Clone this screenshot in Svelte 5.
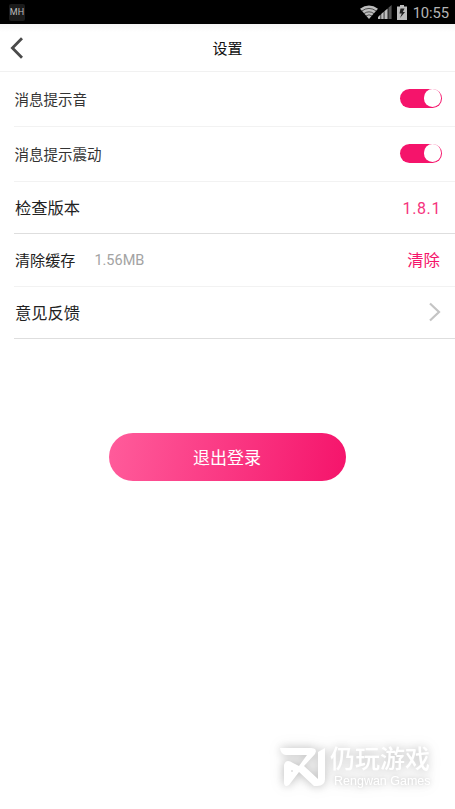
<script lang="ts">
    let sound = $state(true);
    let vibrate = $state(true);
    let cache = $state("1.56MB");
</script>

{#snippet toggle(on: boolean, label: string, flip: () => void)}
    <button class="toggle" class:on role="switch" aria-checked={on} aria-label={label} onclick={flip}>
        <span class="thumb"></span>
    </button>
{/snippet}

<div class="screen">
    <div class="status">
        <span class="app-badge">MH</span>
        <div class="status-right">
            <svg class="wifi" width="18" height="14" viewBox="0 0 18 14">
                <path d="M0 3.8Q9-3 18 3.8L9 14Z" fill="#bdbdbd" />
                <path d="M1.5 6.2Q9 .6 16.5 6.2M3.7 8.8Q9 4.8 14.3 8.8M5.8 11Q9 8.6 12.2 11" fill="none" stroke="#000" stroke-width=".6" />
            </svg>
            <svg class="signal" width="14" height="14" viewBox="0 0 14 14">
                <path d="M0 14V12L2.5 9.6V14ZM3.2 14V9L5.7 6.8V14ZM6.4 14V6.2L9.6 3.4V14Z" fill="#bdbdbd" />
                <path d="M10.4 14V2.8L13.6 0V14Z" fill="#555" />
            </svg>
            <svg class="battery" width="10" height="15" viewBox="0 0 10 15">
                <path d="M3 0H7V1.5H10V15H0V1.5H3Z" fill="#bdbdbd" />
                <path d="M7.5 3.5H3.5L2.5 8.5H4.8L3 13L8 7H5.8Z" fill="#222" />
            </svg>
            <span class="clock">10:55</span>
        </div>
    </div>

    <header>
        <button class="back" aria-label="返回">
            <svg width="14" height="22" viewBox="0 0 14 22">
                <path d="M12 1.2L2.4 11L12 20.8" fill="none" stroke="#4a4a4a" stroke-width="2.8" />
            </svg>
        </button>
        <h1>设置</h1>
    </header>

    <main>
        <div class="row tall">
            <span class="label small">消息提示音</span>
            {@render toggle(sound, "消息提示音", () => (sound = !sound))}
        </div>
        <div class="row tall">
            <span class="label small">消息提示震动</span>
            {@render toggle(vibrate, "消息提示震动", () => (vibrate = !vibrate))}
        </div>
        <div class="row dark">
            <span class="label">检查版本</span>
            <span class="version">1.8.1</span>
        </div>
        <div class="row cache">
            <span class="label medium">清除缓存</span>
            <span class="size">{cache}</span>
            <button class="clear" onclick={() => (cache = "0MB")}>清除</button>
        </div>
        <div class="row dark">
            <span class="label">意见反馈</span>
            <svg class="arrow" width="12" height="20" viewBox="0 0 12 20">
                <path d="M1 1.5L10 10L1 18.5" fill="none" stroke="#c4c4c4" stroke-width="2.2" />
            </svg>
        </div>
    </main>

    <button class="logout">退出登录</button>

    <div class="watermark">
        <svg width="47" height="42" viewBox="0 0 47 42">
            <path d="M1 2H32Q39 2 36 8L25 20L39 33V6L46 2V33Q46 40 38 40H35L20 26L10 39Q5 42 5 36V19Q7 12 14 17L20 20L28 9H7Q2 9 1 2Z" fill="#fff" />
            <circle cx="13" cy="25" r="1" fill="#ddd" />
        </svg>
        <div class="brand">
            <span class="brand-cn">仍玩游戏</span>
            <span class="brand-en">Rengwan Games</span>
        </div>
    </div>
</div>

<style>
    :global(body) {
        margin: 0;
        background: #fff;
    }

    .screen {
        position: relative;
        height: 809px;
        overflow: hidden;
        background: #fff;
        color: #222;
        font-family: Roboto, "Noto Sans CJK SC", sans-serif;
    }

    button {
        padding: 0;
        border: none;
        background: none;
        font-family: inherit;
        cursor: pointer;
    }

    svg {
        display: block;
        flex: none;
    }

    .status {
        display: flex;
        align-items: center;
        justify-content: space-between;
        height: 24px;
        padding: 0 6px 0 9px;
        background: #000;
    }

    .app-badge {
        width: 16px;
        height: 17px;
        border-radius: 2px;
        background: #1b1b1b;
        color: #bbb;
        font-size: 9px;
        line-height: 17px;
        text-align: center;
    }

    .status-right {
        display: flex;
        align-items: center;
    }

    .battery {
        margin: 0 6px 0 5px;
    }

    .clock {
        padding-top: 1px;
        color: #b5b5b5;
        font-size: 14.8px;
        line-height: 24px;
        letter-spacing: -0.1px;
    }

    header {
        display: grid;
        grid-template-columns: 40px 1fr 40px;
        align-items: center;
        height: 47px;
        border-bottom: 1px solid #f1f1f1;
        background: linear-gradient(#f5f5f5, #fff 8px);
    }

    .back {
        padding-left: 10px;
    }

    h1 {
        margin: 0;
        padding-top: 2px;
        color: #111;
        font-size: 15px;
        font-weight: 400;
        line-height: 22px;
        text-align: center;
    }

    main {
        padding-left: 14px;
    }

    .row {
        display: flex;
        align-items: center;
        box-sizing: border-box;
        height: 52px;
        padding-right: 14px;
        border-bottom: 1px solid #f2f2f2;
    }

    .row.tall {
        height: 55px;
        padding-right: 13px;
    }

    .row.dark {
        border-color: #dedede;
    }

    .row.cache {
        height: 53px;
    }

    .label {
        flex: 1;
        padding: 2px 0 0 1px;
        font-size: 16.3px;
        line-height: 24px;
    }

    .small {
        padding: 3px 0 0 0.5px;
        color: #333;
        font-size: 14.5px;
    }

    .medium {
        flex: none;
        font-size: 15.1px;
    }

    .toggle {
        display: flex;
        box-sizing: border-box;
        width: 42px;
        height: 19px;
        margin-bottom: 2px;
        padding: 0.8px;
        border-radius: 10px;
        background: #ccc;
    }

    .toggle.on {
        justify-content: flex-end;
        background: #f5146b;
    }

    .thumb {
        width: 17.4px;
        height: 17.4px;
        border-radius: 50%;
        background: #fff;
    }

    .version {
        padding-top: 2px;
        color: #f5337e;
        font-size: 16px;
        letter-spacing: 0.6px;
    }

    .size {
        flex: 1;
        margin-left: 19px;
        padding-top: 1px;
        color: #a3a3a3;
        font-size: 14.5px;
    }

    .clear {
        padding: 2px 1px 0 0;
        color: #f5146b;
        font-size: 16.4px;
        line-height: 24px;
    }

    .arrow {
        margin-bottom: 1px;
    }

    .logout {
        display: block;
        width: 237px;
        height: 48px;
        margin: 94px auto 0;
        padding: 0 1px 1px 0;
        border-radius: 24px;
        background: linear-gradient(100deg, #ff5c9b, #f5146b);
        color: #fff;
        font-size: 17px;
    }

    /* white mark that only shows through its own shadow */
    .watermark {
        position: absolute;
        left: 279px;
        top: 745px;
        display: flex;
        gap: 4px;
        color: #fff;
        filter: drop-shadow(0 0 5px rgba(0, 0, 0, 0.2)) drop-shadow(0 0 7px rgba(0, 0, 0, 0.1));
    }

    .watermark svg {
        margin-top: 1px;
    }

    .brand {
        display: flex;
        flex-direction: column;
    }

    .brand-cn {
        padding-top: 1px;
        font-size: 25px;
        font-weight: 500;
        line-height: 28px;
    }

    .brand-en {
        margin-left: 4px;
        font-family: "Liberation Sans", Arial, sans-serif;
        font-size: 12.5px;
        line-height: 15px;
        text-shadow: 0 0 4px rgba(0, 0, 0, 0.15);
    }
</style>
